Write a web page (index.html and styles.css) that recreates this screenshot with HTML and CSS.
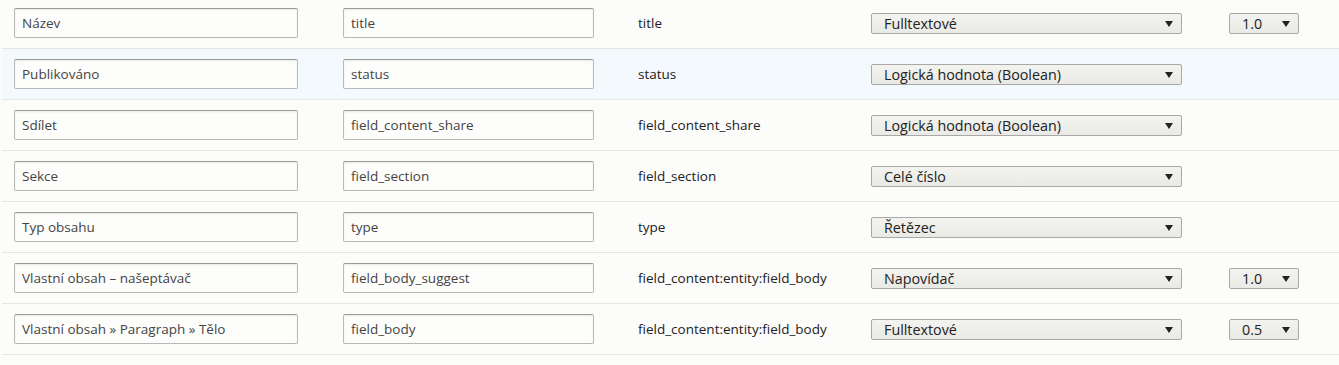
FILE: index.html
```
<!DOCTYPE html>
<html lang="cs">
<head>
  <meta charset="UTF-8" />
  <title>Pole indexu</title>
  <link rel="stylesheet" href="styles.css">
</head>
<body>
  <div class="fields">
    <div class="row">
      <div class="cell"><input type="text" class="form-text label" value="Název"></div>
      <div class="cell"><input type="text" class="form-text machine" value="title"></div>
      <div class="cell path">title</div>
      <div class="cell"><span class="select wide"><select><option>Fulltextové</option></select></span></div>
      <div class="cell"><span class="select boost"><select><option>1.0</option></select></span></div>
    </div>
    <div class="row hover">
      <div class="cell"><input type="text" class="form-text label" value="Publikováno"></div>
      <div class="cell"><input type="text" class="form-text machine" value="status"></div>
      <div class="cell path">status</div>
      <div class="cell"><span class="select wide"><select><option>Logická hodnota (Boolean)</option></select></span></div>
      <div class="cell"></div>
    </div>
    <div class="row">
      <div class="cell"><input type="text" class="form-text label" value="Sdílet"></div>
      <div class="cell"><input type="text" class="form-text machine" value="field_content_share"></div>
      <div class="cell path">field_content_share</div>
      <div class="cell"><span class="select wide"><select><option>Logická hodnota (Boolean)</option></select></span></div>
      <div class="cell"></div>
    </div>
    <div class="row">
      <div class="cell"><input type="text" class="form-text label" value="Sekce"></div>
      <div class="cell"><input type="text" class="form-text machine" value="field_section"></div>
      <div class="cell path">field_section</div>
      <div class="cell"><span class="select wide"><select><option>Celé číslo</option></select></span></div>
      <div class="cell"></div>
    </div>
    <div class="row">
      <div class="cell"><input type="text" class="form-text label" value="Typ obsahu"></div>
      <div class="cell"><input type="text" class="form-text machine" value="type"></div>
      <div class="cell path">type</div>
      <div class="cell"><span class="select wide"><select><option>Řetězec</option></select></span></div>
      <div class="cell"></div>
    </div>
    <div class="row">
      <div class="cell"><input type="text" class="form-text label" value="Vlastní obsah – našeptávač"></div>
      <div class="cell"><input type="text" class="form-text machine" value="field_body_suggest"></div>
      <div class="cell path">field_content:entity:field_body</div>
      <div class="cell"><span class="select wide"><select><option>Napovídač</option></select></span></div>
      <div class="cell"><span class="select boost"><select><option>1.0</option></select></span></div>
    </div>
    <div class="row">
      <div class="cell"><input type="text" class="form-text label" value="Vlastní obsah » Paragraph » Tělo"></div>
      <div class="cell"><input type="text" class="form-text machine" value="field_body"></div>
      <div class="cell path">field_content:entity:field_body</div>
      <div class="cell"><span class="select wide"><select><option>Fulltextové</option></select></span></div>
      <div class="cell"><span class="select boost"><select><option>0.5</option></select></span></div>
    </div>
    <div class="row">
      <div class="cell"><input type="text" class="form-text label" value=""></div>
      <div class="cell"><input type="text" class="form-text machine" value=""></div>
      <div class="cell path"></div>
      <div class="cell"></div>
      <div class="cell"></div>
    </div>
  </div>
</body>
</html>
```

FILE: styles.css
```
body {
  margin: 0;
  background-color: #fcfcfa;
  font-family: 'Open Sans', sans-serif;
  font-size: 13.5px;
  font-variant-ligatures: none;
  color: #333;
  overflow: hidden;
}
.fields {
  margin: -2px 0 0 2px;
}
.row {
  display: grid;
  grid-template-columns: 329px 295px 233px 358px 1fr;
  align-items: center;
  height: 50px;
  border-bottom: 1px solid #e6e6e4;
}
.row.hover {
  background-color: #f4f9fd;
}
.cell {
  padding: 0 12px;
}
.form-text {
  box-sizing: border-box;
  height: 30px;
  padding: 0 7px;
  border: 1px solid #b8b8b8;
  border-top-color: #999;
  border-radius: 2px;
  background-color: #fdfdfc;
  box-shadow: inset 0 1px 2px rgba(0,0,0,0.08);
  font-family: inherit;
  font-size: 13.5px;
  font-variant-ligatures: none;
  color: #444;
  outline: none;
}
.form-text.label {
  width: 284px;
}
.form-text.machine {
  width: 251px;
}
.path {
  color: #222;
}
.select {
  position: relative;
  display: inline-block;
  vertical-align: middle;
}
.select select {
  -webkit-appearance: none;
  appearance: none;
  box-sizing: border-box;
  height: 21px;
  width: 100%;
  padding: 0 20px 0 12px;
  border: 1px solid #a8a8a8;
  border-radius: 2px;
  background: linear-gradient(#f3f3ef, #e9e9e5);
  font-family: inherit;
  font-size: 14.3px;
  line-height: 19px;
  font-variant-ligatures: none;
  color: #222;
  outline: none;
}
.select::after {
  content: "";
  position: absolute;
  right: 9px;
  top: 8px;
  border-left: 4px solid transparent;
  border-right: 4px solid transparent;
  border-top: 6px solid #222;
  pointer-events: none;
}
.select.wide {
  width: 311px;
}
.select.boost {
  width: 70px;
}
```
